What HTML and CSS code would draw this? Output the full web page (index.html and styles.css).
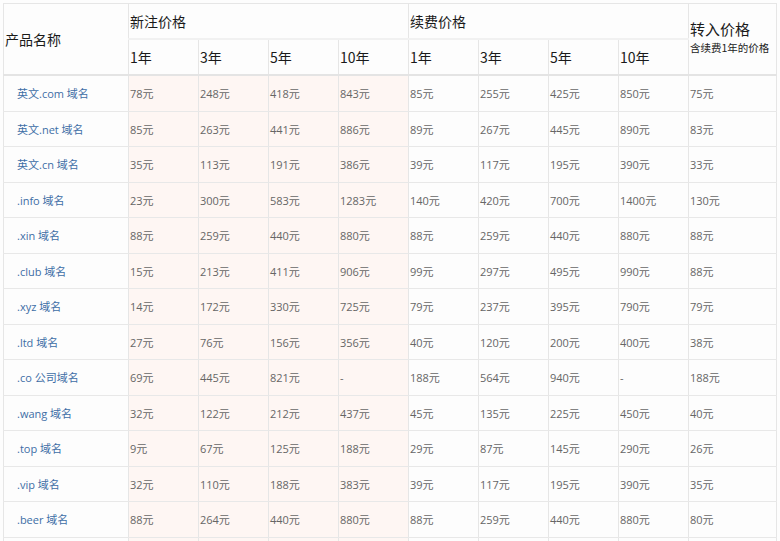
FILE: index.html
```html
<!DOCTYPE html>
<html lang="zh-CN">
<head>
<meta charset="utf-8">
<title>域名价格</title>
<link rel="stylesheet" href="styles.css">
</head>
<body>
<div class="wrap">
<table class="price">
<colgroup>
<col class="c-name">
<col class="c-p"><col class="c-p"><col class="c-p"><col class="c-p">
<col class="c-p"><col class="c-p"><col class="c-p"><col class="c-p">
<col class="c-last">
</colgroup>
<thead>
<tr class="h1">
<th rowspan="2" class="th-name">产品名称</th>
<th colspan="4" class="th-group">新注价格</th>
<th colspan="4" class="th-group">续费价格</th>
<th rowspan="2" class="th-tr"><div class="tr-title">转入价格</div><div class="tr-sub">含续费1年的价格</div></th>
</tr>
<tr class="h2">
<th>1年</th><th>3年</th><th>5年</th><th>10年</th>
<th>1年</th><th>3年</th><th>5年</th><th>10年</th>
</tr>
</thead>
<tbody>
<tr><td class="name"><a>英文.com 域名</a></td><td class="n">78元</td><td class="n">248元</td><td class="n">418元</td><td class="n">843元</td><td>85元</td><td>255元</td><td>425元</td><td>850元</td><td>75元</td></tr>
<tr><td class="name"><a>英文.net 域名</a></td><td class="n">85元</td><td class="n">263元</td><td class="n">441元</td><td class="n">886元</td><td>89元</td><td>267元</td><td>445元</td><td>890元</td><td>83元</td></tr>
<tr><td class="name"><a>英文.cn 域名</a></td><td class="n">35元</td><td class="n">113元</td><td class="n">191元</td><td class="n">386元</td><td>39元</td><td>117元</td><td>195元</td><td>390元</td><td>33元</td></tr>
<tr><td class="name"><a>.info 域名</a></td><td class="n">23元</td><td class="n">300元</td><td class="n">583元</td><td class="n">1283元</td><td>140元</td><td>420元</td><td>700元</td><td>1400元</td><td>130元</td></tr>
<tr><td class="name"><a>.xin 域名</a></td><td class="n">88元</td><td class="n">259元</td><td class="n">440元</td><td class="n">880元</td><td>88元</td><td>259元</td><td>440元</td><td>880元</td><td>88元</td></tr>
<tr><td class="name"><a>.club 域名</a></td><td class="n">15元</td><td class="n">213元</td><td class="n">411元</td><td class="n">906元</td><td>99元</td><td>297元</td><td>495元</td><td>990元</td><td>88元</td></tr>
<tr><td class="name"><a>.xyz 域名</a></td><td class="n">14元</td><td class="n">172元</td><td class="n">330元</td><td class="n">725元</td><td>79元</td><td>237元</td><td>395元</td><td>790元</td><td>79元</td></tr>
<tr><td class="name"><a>.ltd 域名</a></td><td class="n">27元</td><td class="n">76元</td><td class="n">156元</td><td class="n">356元</td><td>40元</td><td>120元</td><td>200元</td><td>400元</td><td>38元</td></tr>
<tr><td class="name"><a>.co 公司域名</a></td><td class="n">69元</td><td class="n">445元</td><td class="n">821元</td><td class="n">-</td><td>188元</td><td>564元</td><td>940元</td><td>-</td><td>188元</td></tr>
<tr><td class="name"><a>.wang 域名</a></td><td class="n">32元</td><td class="n">122元</td><td class="n">212元</td><td class="n">437元</td><td>45元</td><td>135元</td><td>225元</td><td>450元</td><td>40元</td></tr>
<tr><td class="name"><a>.top 域名</a></td><td class="n">9元</td><td class="n">67元</td><td class="n">125元</td><td class="n">188元</td><td>29元</td><td>87元</td><td>145元</td><td>290元</td><td>26元</td></tr>
<tr><td class="name"><a>.vip 域名</a></td><td class="n">32元</td><td class="n">110元</td><td class="n">188元</td><td class="n">383元</td><td>39元</td><td>117元</td><td>195元</td><td>390元</td><td>35元</td></tr>
<tr><td class="name"><a>.beer 域名</a></td><td class="n">88元</td><td class="n">264元</td><td class="n">440元</td><td class="n">880元</td><td>88元</td><td>259元</td><td>440元</td><td>880元</td><td>80元</td></tr>
<tr class="tail"><td class="name"></td><td class="n"></td><td class="n"></td><td class="n"></td><td class="n"></td><td></td><td></td><td></td><td></td><td></td></tr>
</tbody>
</table>
</div>
</body>
</html>
```

FILE: styles.css
```css
html, body {
  margin: 0;
  padding: 0;
  background: #fdfdfd;
}
body {
  font-family: "Open Sans", "Noto Sans CJK SC", sans-serif;
  color: #222;
}
.wrap {
  padding: 3px 0 0 3px;
}
.price {
  border-collapse: collapse;
  table-layout: fixed;
  width: 774px;
  border: 1px solid #e6e6e6;
  background: #fdfdfd;
}
.c-name { width: 125px; }
.c-p { width: 70px; }
.c-last { width: 88px; }

.price th {
  font-weight: normal;
  font-size: 14px;
  color: #1a1a1a;
  text-align: left;
  padding: 0 0 0 1px;
  font-family: "Noto Sans CJK SC", sans-serif;
  line-height: 18px;
  background: #fdfdfd;
}
.h1 th {
  height: 34px;
  border-left: 1px solid #e6e6e6;
  border-bottom: 2px solid #f1f1f1;
}
.h1 .th-name {
  border-left: 1px solid #e6e6e6;
  border-bottom: 2px solid #e4e4e4;
  vertical-align: middle;
}
.h2 th {
  height: 34px;
  border-left: 1px solid #e6e6e6;
  border-bottom: 2px solid #e4e4e4;
}
.th-tr {
  vertical-align: middle;
  border-bottom: 2px solid #e4e4e4 !important;
}
.tr-title {
  font-size: 15px;
  line-height: 20px;
  margin-top: -3px;
}
.tr-sub {
  font-size: 10.5px;
  line-height: 16px;
  color: #222;
  padding-top: 1px;
}

.price td {
  height: 34.5px;
  padding: 0 0 0 1px;
  font-size: 11px;
  color: #666;
  border-left: 1px solid #e6e6e6;
  border-bottom: 1px solid #e8e8e8;
  vertical-align: middle;
  white-space: nowrap;
  overflow: hidden;
}
.price td.n {
  background: #fef6f3;
}
.price td.name {
  padding-left: 13px;
}
.name a {
  color: #3d6ea6;
  text-decoration: none;
}
```
